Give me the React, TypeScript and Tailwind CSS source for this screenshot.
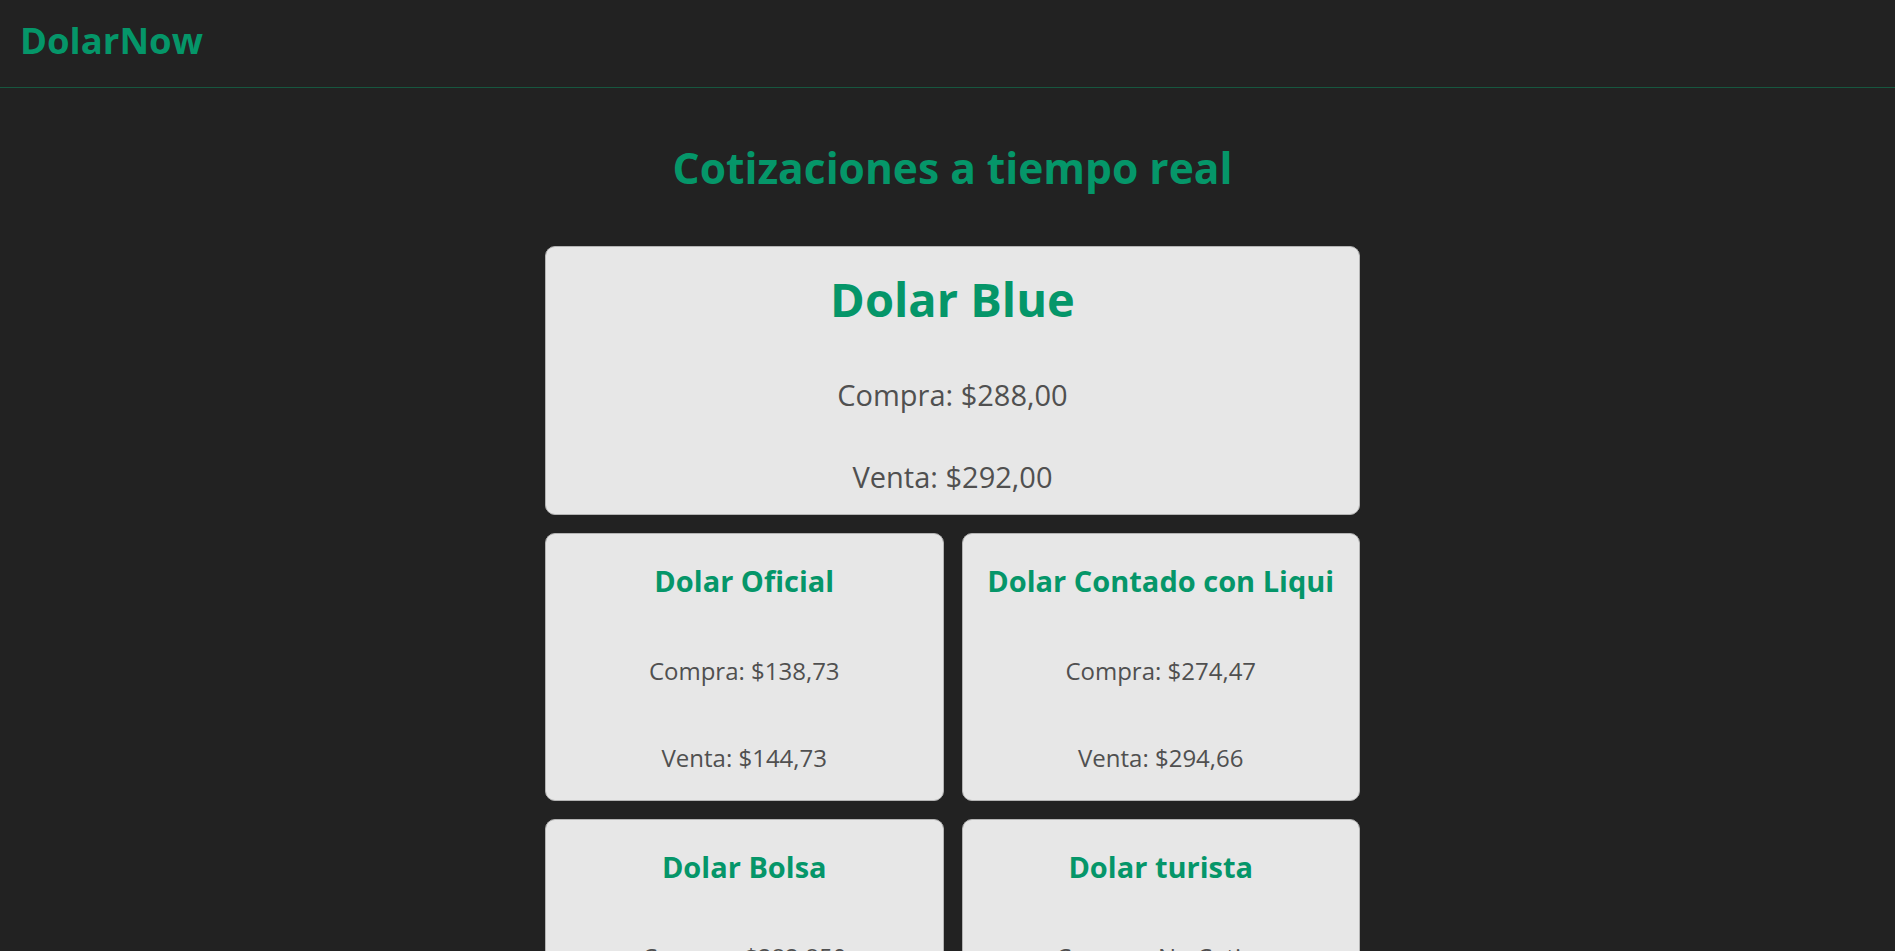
import React from 'react';

interface Quote {
    name: string;
    compra: string;
    venta: string;
}

const quotes: Quote[] = [
    { name: 'Dolar Oficial', compra: '$138,73', venta: '$144,73' },
    { name: 'Dolar Contado con Liqui', compra: '$274,47', venta: '$294,66' },
    { name: 'Dolar Bolsa', compra: '$282,850', venta: '$283,580' },
    { name: 'Dolar turista', compra: 'No Cotiza', venta: '$253,28' },
    { name: 'Dolar', compra: '$0,00', venta: '$0,00' },
    { name: 'Bitcoin', compra: '$0,00', venta: '$0,00' },
];

const font = "font-['Open_Sans','Noto_Sans',sans-serif]";

const QuoteCard: React.FC<{ quote: Quote }> = ({ quote }) => (
    <div className="flex flex-col items-center rounded-[10px] border border-[#b4b4b4] bg-[#e7e7e7] pt-[32px] pb-[30px] text-center">
        <h3 className="text-[29px] leading-none font-bold text-[#059669] whitespace-nowrap">{quote.name}</h3>
        <p className="mt-[64px] text-[24px] leading-none text-[#505050]">Compra: {quote.compra}</p>
        <p className="mt-[63px] text-[24px] leading-none text-[#505050]">Venta: {quote.venta}</p>
    </div>
);

export default function App() {
    return (
        <div className={`min-h-screen bg-[#222] ${font}`}>
            {/* Top bar */}
            <header className="h-[88px] border-b border-[#17573f] pl-[20px] pt-[22px]">
                <h1 className="text-[36.5px] leading-none font-bold text-[#059669]">DolarNow</h1>
            </header>

            <main className="flex flex-col items-center pl-[10px] pb-10">
                <h2 className="mt-[59px] text-[42.5px] leading-none font-bold text-[#059669]">
                    Cotizaciones a tiempo real
                </h2>

                <div className="mt-[56px] grid w-[815px] grid-cols-2 gap-[18px]">
                    {/* Featured quote */}
                    <div className="col-span-2 flex flex-col items-center rounded-[10px] border border-[#b4b4b4] bg-[#e7e7e7] pt-[29px] pb-[23px] text-center">
                        <h3 className="text-[47px] leading-none font-bold text-[#059669]">Dolar Blue</h3>
                        <p className="mt-[57px] text-[29px] leading-none text-[#505050]">Compra: $288,00</p>
                        <p className="mt-[53px] text-[29px] leading-none text-[#505050]">Venta: $292,00</p>
                    </div>

                    {quotes.map((q) => (
                        <QuoteCard key={q.name} quote={q} />
                    ))}
                </div>
            </main>
        </div>
    );
}
